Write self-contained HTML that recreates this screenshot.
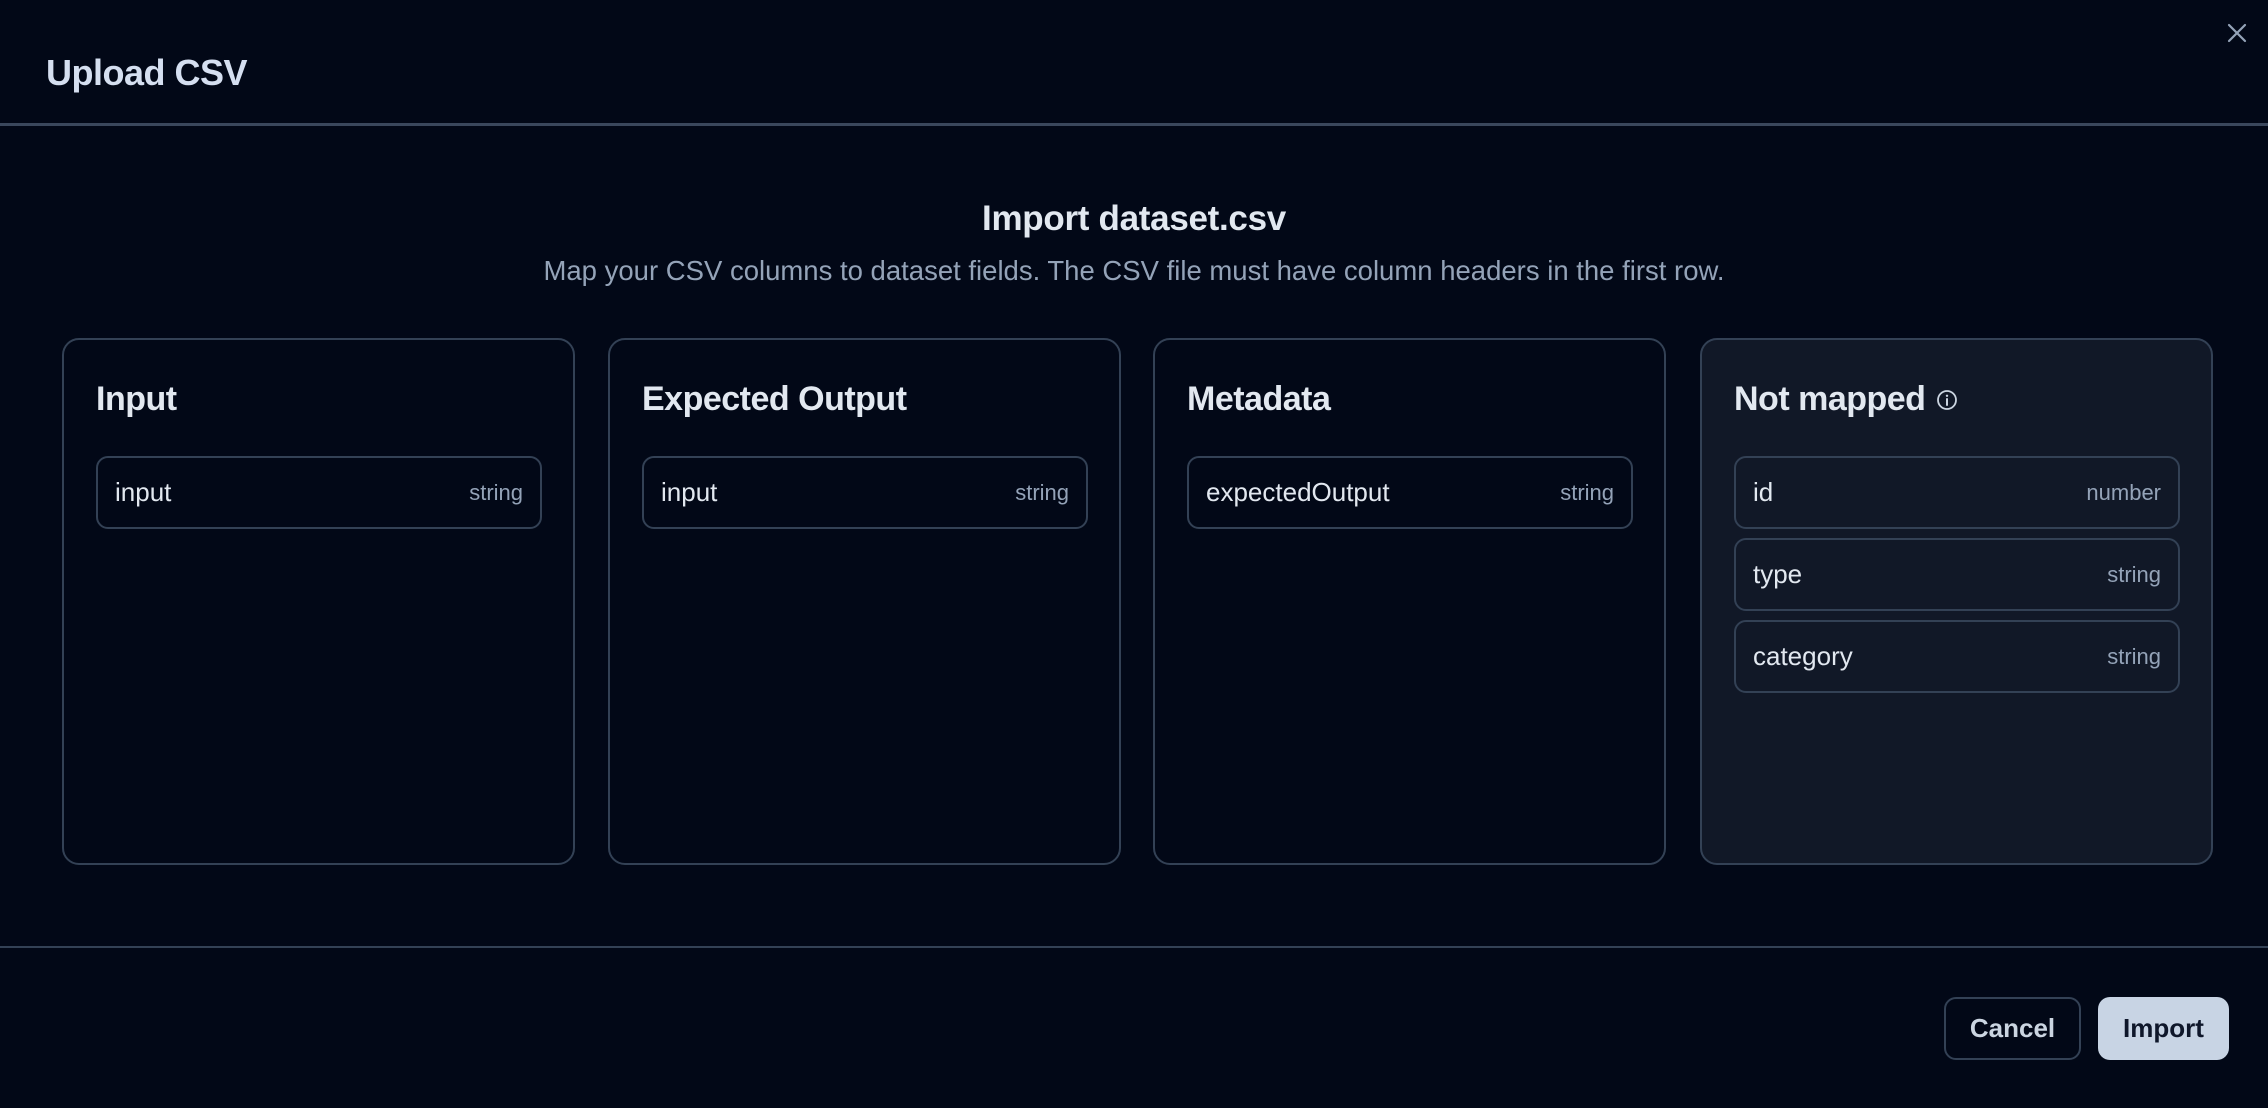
<!DOCTYPE html>
<html><head><meta charset="utf-8"><style>
*{box-sizing:border-box;margin:0;padding:0}
html,body{width:2268px;height:1108px;background:#020817;overflow:hidden;font-family:"Liberation Sans",sans-serif;color:#e2e8f0}
.abs{position:absolute}
.title{left:46px;top:52px;font-size:36px;font-weight:bold;color:#d5dff0;letter-spacing:-0.5px}
.hline{left:0;width:2268px;height:3px;background:#334155}
.h2{left:0;width:2268px;top:199px;text-align:center;font-size:35px;font-weight:bold;color:#e2e8f0;letter-spacing:-0.3px}
.sub{left:0;width:2268px;top:255px;text-align:center;font-size:27.5px;color:#94a3b8}
.card{top:338px;width:513px;height:527px;border:2px solid #334155;border-radius:17px}
.card h3{position:absolute;left:32px;top:40px;font-size:34px;font-weight:bold;color:#e2e8f0;letter-spacing:-0.5px}
.item{position:absolute;left:32px;width:446px;height:73px;border:2px solid #334155;border-radius:12px;display:flex;align-items:center;justify-content:space-between;padding:0 17px}
.item .n{font-size:26px;color:#e2e8f0}
.item .t{font-size:22px;color:#94a3b8}
.btn{top:997px;height:63px;border-radius:12px;font-size:26px;font-weight:bold;display:flex;align-items:center;justify-content:center}
</style></head><body>
<div class="abs title">Upload CSV</div>
<svg class="abs" style="left:2226px;top:22px" width="22" height="22" viewBox="0 0 22 22"><path d="M3 3L19 19M19 3L3 19" stroke="#94a3b8" stroke-width="2.2" stroke-linecap="round"/></svg>
<div class="abs hline" style="top:123px;background:#3a475c"></div>
<div class="abs h2">Import dataset.csv</div>
<div class="abs sub">Map your CSV columns to dataset fields. The CSV file must have column headers in the first row.</div>

<div class="abs card" style="left:62px"><h3>Input</h3>
<div class="item" style="top:116px"><span class="n">input</span><span class="t">string</span></div></div>
<div class="abs card" style="left:608px"><h3>Expected Output</h3>
<div class="item" style="top:116px"><span class="n">input</span><span class="t">string</span></div></div>
<div class="abs card" style="left:1153px"><h3>Metadata</h3>
<div class="item" style="top:116px"><span class="n">expectedOutput</span><span class="t">string</span></div></div>
<div class="abs card" style="left:1700px;background:#111827"><h3>Not mapped <svg width="22" height="22" viewBox="0 0 22 22" style="vertical-align:-1px;margin-left:2px"><circle cx="11" cy="11" r="9" fill="none" stroke="#cbd5e1" stroke-width="1.8"/><path d="M11 10v6" stroke="#cbd5e1" stroke-width="2" stroke-linecap="round"/><circle cx="11" cy="6.8" r="1.2" fill="#cbd5e1"/></svg></h3>
<div class="item" style="top:116px"><span class="n">id</span><span class="t">number</span></div>
<div class="item" style="top:198px"><span class="n">type</span><span class="t">string</span></div>
<div class="item" style="top:280px"><span class="n">category</span><span class="t">string</span></div></div>

<div class="abs hline" style="top:946px;height:2px"></div>
<div class="abs btn" style="left:1944px;width:137px;border:2px solid #334155;color:#cbd5e1">Cancel</div>
<div class="abs btn" style="left:2098px;width:131px;background:#c8d4e4;color:#0f172a">Import</div>
</body></html>
